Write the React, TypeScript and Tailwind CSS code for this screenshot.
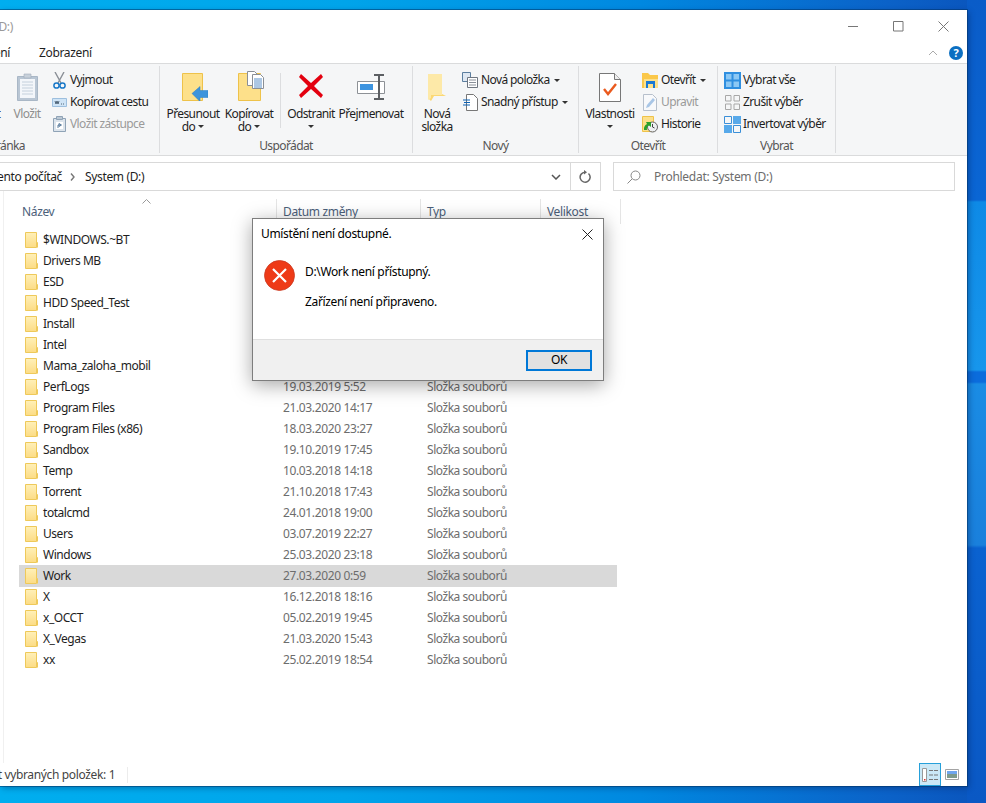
import React from 'react';

const rows = [
  ['$WINDOWS.~BT', '', ''],
  ['Drivers MB', '', ''],
  ['ESD', '', ''],
  ['HDD Speed_Test', '', ''],
  ['Install', '', ''],
  ['Intel', '', ''],
  ['Mama_zaloha_mobil', '', ''],
  ['PerfLogs', '19.03.2019 5:52', 'Složka souborů'],
  ['Program Files', '21.03.2020 14:17', 'Složka souborů'],
  ['Program Files (x86)', '18.03.2020 23:27', 'Složka souborů'],
  ['Sandbox', '19.10.2019 17:45', 'Složka souborů'],
  ['Temp', '10.03.2018 14:18', 'Složka souborů'],
  ['Torrent', '21.10.2018 17:43', 'Složka souborů'],
  ['totalcmd', '24.01.2018 19:00', 'Složka souborů'],
  ['Users', '03.07.2019 22:27', 'Složka souborů'],
  ['Windows', '25.03.2020 23:18', 'Složka souborů'],
  ['Work', '27.03.2020 0:59', 'Složka souborů'],
  ['X', '16.12.2018 18:16', 'Složka souborů'],
  ['x_OCCT', '05.02.2019 19:45', 'Složka souborů'],
  ['X_Vegas', '21.03.2020 15:43', 'Složka souborů'],
  ['xx', '25.02.2019 18:54', 'Složka souborů'],
];

function FolderSmall() {
  return (
    <svg width="13" height="16" viewBox="0 0 13 16" className="shrink-0">
      <defs>
        <linearGradient id="fs" x1="0" y1="0" x2="0" y2="1">
          <stop offset="0" stopColor="#fff0b8" />
          <stop offset="1" stopColor="#fcdc85" />
        </linearGradient>
      </defs>
      <path d="M.5.5h11v15H.5z" fill="url(#fs)" stroke="#eec95a" />
      <path d="M12.500 15.500v-5h-1v5" fill="#fff3c8" stroke="#eec95a" />
    </svg>
  );
}

function Caret() {
  return <span className="inline-block w-0 h-0 border-x-[3px] border-x-transparent border-t-[3px] border-t-[#333]" />;
}

function LargeButton({ w, lines, caret, muted, children }: { w: number; lines: string[]; caret?: boolean; muted?: boolean; children?: React.ReactNode }) {
  return (
    <div className={`flex flex-col items-center shrink-0 ${muted ? 'text-[#8e8e8e]' : ''}`} style={{ width: w }}>
      <div className="h-[41px] pt-[7px] flex justify-center">{children}</div>
      {lines.map((l, i) => (
        <div key={i} className="h-[13px] leading-[13px] whitespace-nowrap flex items-center gap-[3px]">
          {l}
          {caret && lines.length > 1 && i === lines.length - 1 && <Caret />}
        </div>
      ))}
      {caret && lines.length === 1 && (
        <div className="h-[13px] flex items-center"><Caret /></div>
      )}
    </div>
  );
}

function SmallButton({ icon, label, caret, muted }: { icon: React.ReactNode; label: string; caret?: boolean; muted?: boolean }) {
  return (
    <div className={`h-[22px] flex items-center whitespace-nowrap ${muted ? 'text-[#9a9a9a]' : ''}`}>
      <div className="w-[20px] flex justify-center shrink-0">{icon}</div>
      <span className="ml-[1px]">{label}</span>
      {caret && <span className="ml-[4px] flex"><Caret /></span>}
    </div>
  );
}

function Group({ w, label, children }: { w: number; label: React.ReactNode; children: React.ReactNode }) {
  return (
    <div className="shrink-0 h-[87px] mt-[2px] border-r border-[#dcdddf] flex flex-col" style={{ width: w }}>
      <div className="h-[71px] flex">{children}</div>
      <div className="text-center leading-[14px] text-[#555] mt-[3px] whitespace-nowrap">{label}</div>
    </div>
  );
}

function MoveIcon() {
  return (
    <svg width="26" height="28" viewBox="0 0 26 28" className="ml-[4px]">
      <path d="M.5.500h20v27H.5z" fill="#fde08a" stroke="#eec24a" />
      <path d="M10 20.500l8-7v4h8v7h-8v4z" fill="#3d94dc" stroke="#2a7cc2" strokeWidth=".5" />
    </svg>
  );
}

function CopyIcon() {
  return (
    <svg width="26" height="30" viewBox="0 0 26 30" className="ml-[4px] -mt-[2px]">
      <path d="M.5 2.500h22v27H.5z" fill="#fde08a" stroke="#eec24a" />
      <path d="M9.500.5h7l3 3v11h-10z" fill="#fff" stroke="#8a8f96" />
      <path d="M14.500 3.500h8l3 3v11h-11z" fill="#fff" stroke="#8a8f96" />
      <path d="M16 8h8M16 10h8M16 12h8M16 14h8M16 16h8" stroke="#5a8fc8" />
    </svg>
  );
}

function RenameIcon() {
  return (
    <svg width="29" height="26" viewBox="0 0 29 26" className="mt-[1px]">
      <path d="M.5 7.500h27v12H.5z" fill="#fff" stroke="#8d9196" />
      <path d="M3 10h13v6H3z" fill="#3d94e0" />
      <path d="M17 1h10M17 25h10M22 1v24" stroke="#5c5f63" strokeWidth="2" fill="none" />
    </svg>
  );
}

function ClipboardIcon() {
  return (
    <svg width="21" height="29" viewBox="0 0 21 29">
      <path d="M.5 3.500h20v24H.5z" fill="#b9c6d4" stroke="#a9b7c6" />
      <path d="M3 6h15v19H3z" fill="#f3f6fa" />
      <path d="M5 9h11M5 12h11M5 15h11M5 18h11M5 21h11" stroke="#c4d0dc" />
      <path d="M7 1h7v4H7z" fill="#c7d0da" stroke="#a3adb8" strokeWidth=".6" />
    </svg>
  );
}

export default function App() {
  return (
    <div className="relative w-[986px] h-[803px] overflow-hidden bg-[linear-gradient(90deg,#00aeef_0%,#00a4ea_35%,#0088e0_65%,#0b62c8_90%,#0a54bc_100%)] pt-[10px] text-[12px] text-[#1e1e1e] tracking-[-0.35px] [font-family:'Noto_Sans',sans-serif]">
      {/* wallpaper on the right edge */}
      <div className="absolute right-0 top-0 w-[19px] h-full bg-[linear-gradient(180deg,#0a5cc8_0px,#0a66d4_200px,#0e8ae6_202px,#1796ec_370px,#0b6cdc_372px,#0b6cdc_382px,#1a8ce4_384px,#1a86e0_460px,#1a80dc_545px,#0a62d0_548px,#0a58c4_803px)]" />

      {/* Explorer window */}
      <div className="relative w-[967px] h-[776px] bg-white flex flex-col overflow-hidden shadow-[0_0_0_1px_rgba(0,50,100,0.5),2px_2px_6px_rgba(0,30,80,0.4)]">
        {/* Title bar */}
        <div className="h-[33px] flex items-center shrink-0 relative text-[#9a9a9a]">
          <span className="ml-[-65px] w-[78px] text-right whitespace-nowrap">System (D:)</span>
          <div className="ml-auto flex items-center">
            <svg width="11" height="11" viewBox="0 0 11 11" className="mr-[34px]"><path d="M0 5.500h10" stroke="#777" /></svg>
            <svg width="11" height="11" viewBox="0 0 11 11" className="mr-[34px]"><path d="M.5.500h9.500v9.500H.5z" fill="none" stroke="#777" /></svg>
            <svg width="11" height="11" viewBox="0 0 11 11" className="mr-[18px]"><path d="M.5.500l10 10M10.500.500l-10 10" stroke="#777" /></svg>
          </div>
        </div>

        {/* Tabs */}
        <div className="h-[20px] flex items-center shrink-0 whitespace-nowrap">
          <span className="ml-[-30px] w-[40px] text-right">Sdílení</span>
          <span className="ml-[29px]">Zobrazení</span>
          <div className="ml-auto flex items-center mr-[4px]">
            <svg width="10" height="6" viewBox="0 0 10 6" className="mr-[11px]"><path d="M1 5l4-4 4 4" fill="none" stroke="#aaa" /></svg>
            <span className="w-[14px] h-[14px] rounded-full bg-[#0b6fc2] text-white text-[11px] font-bold flex items-center justify-center">?</span>
          </div>
        </div>

        {/* Ribbon */}
        <div className="h-[93px] shrink-0 bg-[#f5f6f7] border-y border-[#dadbdc] flex tracking-[-0.6px]">
          <Group w={160} label={<div className="ml-[-40px] w-[65px] text-right">Schránka</div>}>
            <div className="ml-[-51px] flex">
              <LargeButton w={54} lines={['Kopírovat']} />
              <div className="w-[9px] shrink-0" />
              <LargeButton w={30} muted lines={['Vložit']}><ClipboardIcon /></LargeButton>
            </div>
            <div className="flex flex-col pt-[3px] ml-[7px]">
              <SmallButton label="Vyjmout" icon={
                <svg width="13" height="17" viewBox="0 0 13 17"><path d="M2 0l6 11M11 0L5 11" stroke="#8a8f96" strokeWidth="1.400" fill="none" /><circle cx="3.500" cy="13.500" r="2.600" fill="none" stroke="#1878c8" strokeWidth="1.500" /><circle cx="9.500" cy="13.500" r="2.600" fill="none" stroke="#1878c8" strokeWidth="1.500" /></svg>
              } />
              <SmallButton label="Kopírovat cestu" icon={
                <svg width="15" height="9" viewBox="0 0 15 9"><path d="M.5.500h14v8H.5z" fill="#cfe4f6" stroke="#9dbfde" /><path d="M3 3l1 3 1-3 1 3 1-3M9 6h1M11 6h1" fill="none" stroke="#33475c" strokeWidth=".8" /></svg>
              } />
              <SmallButton muted label="Vložit zástupce" icon={
                <svg width="13" height="16" viewBox="0 0 13 16"><path d="M.5 2.500h12v13H.5z" fill="#dce4ec" stroke="#8fa3b6" /><path d="M3.500.5h6v3h-6z" fill="#bcc8d4" stroke="#8fa3b6" /><path d="M3 6h7v7H3z" fill="#fff" /><path d="M5 12V9h3M6 7.500l2.500 1.500L6 10.500z" fill="none" stroke="#5d7f9f" /></svg>
              } />
            </div>
          </Group>
          <Group w={253} label="Uspořádat">
            <div className="w-[4px] shrink-0" />
            <LargeButton w={58} lines={['Přesunout', 'do']} caret><MoveIcon /></LargeButton>
            <LargeButton w={54} lines={['Kopírovat', 'do']} caret><CopyIcon /></LargeButton>
            <div className="w-[8px] shrink-0 flex justify-center mt-[7px] h-[55px]"><div className="w-px bg-[#dcdddf]" /></div>
            <LargeButton w={54} lines={['Odstranit']} caret>
              <svg width="26" height="26" viewBox="0 0 26 26"><path d="M3 1l10 9 10-9 2 3-9 9 9 9-2 3-10-9-10 9-2-3 9-9-9-9z" fill="#e3000f" /></svg>
            </LargeButton>
            <LargeButton w={66} lines={['Přejmenovat']}><RenameIcon /></LargeButton>
          </Group>
          <Group w={166} label="Nový">
            <LargeButton w={48} lines={['Nová', 'složka']}>
              <svg width="20" height="29" viewBox="0 0 20 29"><path d="M1 1h14v20l4 2H7l-3 5-3-3z" fill="#fbd873" /><path d="M1 1h14v21H4v3l-3 2z" fill="#fde9a8" /></svg>
            </LargeButton>
            <div className="flex flex-col pt-[3px] ml-[-1px]">
              <SmallButton caret label="Nová položka" icon={
                <svg width="16" height="16" viewBox="0 0 16 16"><path d="M.5.500h8v9h-8z" fill="#dfe8f2" stroke="#5c7e9f" /><path d="M5.500 5.500h10v10h-10z" fill="#fff" stroke="#6f7680" /><path d="M7 8h7M7 10.500h7M7 13h7" stroke="#8a9099" /></svg>
              } />
              <SmallButton caret label="Snadný přístup" icon={
                <svg width="15" height="17" viewBox="0 0 15 17"><path d="M3.500.5h7l4 4v12h-11z" fill="#fff" stroke="#777" /><path d="M0 6h7M1 8.500h6M0 11h7" stroke="#0d62b5" /></svg>
              } />
            </div>
          </Group>
          <Group w={139} label="Otevřít">
            <div className="w-[3px] shrink-0" />
            <LargeButton w={56} lines={['Vlastnosti']} caret>
              <svg width="22" height="29" viewBox="0 0 22 29"><path d="M.5.500h15l6 6v22H.5z" fill="#fff" stroke="#777" /><path d="M15.500.5v6h6" fill="#eee" stroke="#777" /><path d="M5 16l4 5 8-10" fill="none" stroke="#ea5a1e" strokeWidth="2.400" /></svg>
            </LargeButton>
            <div className="flex flex-col pt-[3px] ml-[2px]">
              <SmallButton caret label="Otevřít" icon={
                <svg width="16" height="15" viewBox="0 0 16 15"><path d="M0 0h6l2 2h8v13H0z" fill="#fbc84a" /><path d="M2 6h14v9H2z" fill="#fde08a" /><path d="M4 8h9v7h-2v-4H6v4H4z" fill="#1b79d4" /></svg>
              } />
              <SmallButton muted label="Upravit" icon={
                <svg width="14" height="17" viewBox="0 0 14 17"><path d="M.5.500h9l4 4v12H.5z" fill="#f8f9fb" stroke="#b7c0cc" /><path d="M3 14l1-3 6-7 2 2-6 7z" fill="#a9c6e6" /></svg>
              } />
              <SmallButton label="Historie" icon={
                <svg width="16" height="17" viewBox="0 0 16 17"><path d="M.5.500h11v15H.5z" fill="#fde08a" stroke="#eec24a" /><circle cx="10.500" cy="11" r="5" fill="#eef0f2" stroke="#666" /><path d="M10.500 8v3l2 1" fill="none" stroke="#444" /><path d="M2 14a6 6 0 0 1 3-6l-1-2h5v5L7 9.500A4 4 0 0 0 5 14z" fill="#2ca02c" /></svg>
              } />
            </div>
          </Group>
          <Group w={118} label="Vybrat">
            <div className="flex flex-col pt-[3px] ml-[4px]">
              <SmallButton label="Vybrat vše" icon={
                <svg width="17" height="17" viewBox="0 0 17 17"><path d="M0 0h17v17H0z" fill="#2f8fe0" /><path d="M2 2h5.500v5.500H2zM9.500 2H15v5.500H9.500zM2 9.500h5.500V15H2zM9.500 9.500H15V15H9.500z" fill="#8cc8f4" /></svg>
              } />
              <SmallButton label="Zrušit výběr" icon={
                <svg width="15" height="15" viewBox="0 0 15 15"><path d="M.5.500h5.500v5.500H.5zM9 .5h5.500v5.500H9zM.5 9h5.500v5.500H.5zM9 9h5.500v5.500H9z" fill="#f5f6f7" stroke="#a8a8a8" /></svg>
              } />
              <SmallButton label="Invertovat výběr" icon={
                <svg width="17" height="17" viewBox="0 0 17 17"><path d="M.5.500h7v7h-7z" fill="#f5f6f7" stroke="#3a8fd8" /><path d="M9 0h8v8H9z" fill="#57a9ea" /><path d="M0 9h8v8H0z" fill="#57a9ea" /><path d="M9.500 9.500h7v7h-7z" fill="#f5f6f7" stroke="#3a8fd8" /></svg>
              } />
            </div>
          </Group>
        </div>

        {/* Address + search */}
        <div className="h-[29px] mt-[6px] shrink-0 flex whitespace-nowrap">
          <div className="w-[601px] border border-l-0 border-[#d9d9d9] flex items-center">
            <span className="ml-[-17px] w-[79px] text-right">Tento počítač</span>
            <svg width="6" height="8" viewBox="0 0 6 8" className="ml-[8px]"><path d="M1 .5l3 3.500-3 3.500" fill="none" stroke="#777" strokeWidth="1.400" /></svg>
            <span className="ml-[9px]">System (D:)</span>
            <svg width="10" height="6" viewBox="0 0 10 6" className="ml-auto mr-[9px]"><path d="M1 1l4 4 4-4" fill="none" stroke="#555" strokeWidth="1.500" /></svg>
            <div className="h-full w-[30px] border-l border-[#d9d9d9] flex items-center justify-center">
              <svg width="13" height="14" viewBox="0 0 13 14"><path d="M9.500 3.500a5 5 0 1 1-3.500-1.300" fill="none" stroke="#666" strokeWidth="1.500" /><path d="M5 0l3 2.200-3 2.300z" fill="#666" /></svg>
            </div>
          </div>
          <div className="w-[342px] ml-[12px] border border-[#d9d9d9] flex items-center text-[#6d6d6d] tracking-[-0.28px]">
            <svg width="14" height="14" viewBox="0 0 14 14" className="ml-[13px]"><circle cx="8.500" cy="5.500" r="4.500" fill="none" stroke="#888" /><path d="M5 9l-4.500 4.500" stroke="#888" /></svg>
            <span className="ml-[13px]">Prohledat: System (D:)</span>
          </div>
        </div>

        {/* Listing, with the edge of the hidden navigation pane on the left */}
        <div className="flex-1 flex min-h-0">
          <div className="w-[4px] shrink-0 border-r border-[#f0f0f0]" />
          <div className="flex-1 flex flex-col">
            <div className="h-[25px] mt-[8px] shrink-0 flex text-[#4c607a] whitespace-nowrap relative">
              <div className="w-[273px] pl-[18px] flex items-center border-r border-[#e5e5e5]">Název</div>
              <div className="w-[144px] pl-[6px] flex items-center border-r border-[#e5e5e5]">Datum změny</div>
              <div className="w-[120px] pl-[6px] flex items-center border-r border-[#e5e5e5]">Typ</div>
              <div className="w-[80px] pl-[6px] flex items-center border-r border-[#e5e5e5]">Velikost</div>
              <svg width="9" height="5" viewBox="0 0 9 5" className="absolute left-[138px] top-0"><path d="M.5 4.500l4-4 4 4" fill="none" stroke="#999" /></svg>
            </div>

            <div className="flex-1 pt-[5px] flex flex-col whitespace-nowrap">
              {rows.map(([name, date, type]) => (
                <div key={name} className={`h-[22px] mb-[-1px] w-[598px] ml-[15px] flex items-center shrink-0 ${name === 'Work' ? 'bg-[#d9d9d9]' : ''}`}>
                  <div className="w-[24px] pl-[6px] shrink-0"><FolderSmall /></div>
                  <div className="w-[240px] shrink-0 tracking-[-0.45px]">{name}</div>
                  <div className="w-[144px] shrink-0 text-[#6d6d6d] tracking-[-0.37px]">{date}</div>
                  <div className="text-[#6d6d6d] tracking-[-0.45px]">{type}</div>
                </div>
              ))}
            </div>
          </div>
        </div>

        {/* Status bar */}
        <div className="h-[23px] shrink-0 flex items-center whitespace-nowrap text-[#444]">
          <span className="ml-[-28px] w-[143px] text-right">Počet vybraných položek: 1</span>
          <div className="w-px h-[16px] bg-[#ececec] ml-[12px]" />
          <div className="ml-auto h-full w-[22px] mr-[4px] bg-[#cbe8f6] border border-[#26a0da] flex items-center justify-center">
            <svg width="16" height="14" viewBox="0 0 16 14"><path d="M.5.500h4v13h-4z" fill="#fff" stroke="#999" /><path d="M7 2.500h4M12 2.500h4M7 7h4M12 7h4M7 11.500h4M12 11.500h4" stroke="#777" /><path d="M2 11h1.500v1.500H2z" fill="#d33" /></svg>
          </div>
          <div className="mr-[8px]">
            <svg width="14" height="11" viewBox="0 0 14 11"><path d="M.5.500h13v10H.5z" fill="#fff" stroke="#a3a3a3" /><path d="M2 2h10v3H2z" fill="#6fa6ee" /><path d="M2 5h10v4H2z" fill="#7d9a8c" /></svg>
          </div>
        </div>
      </div>

      {/* Error dialog */}
      <div className="absolute left-[252px] top-[218px] w-[352px] h-[163px] bg-white border border-[#7d7d7d] shadow-[0_4px_18px_rgba(0,0,0,0.35)] flex flex-col text-black">
        <div className="h-[28px] flex items-center pl-[8px] mt-[1px] shrink-0">
          <span>Umístění není dostupné.</span>
          <svg width="11" height="11" viewBox="0 0 11 11" className="ml-auto mr-[10px]"><path d="M.5.500l10 10M10.500.500l-10 10" stroke="#222" /></svg>
        </div>
        <div className="flex-1 flex pl-[11px] pt-[12px]">
          <svg width="31" height="31" viewBox="0 0 31 31" className="shrink-0">
            <circle cx="15.500" cy="15.500" r="15" fill="#ee3a17" stroke="#c93a22" strokeWidth=".8" />
            <path d="M9 9l13 13M22 9L9 22" stroke="#fff" strokeWidth="2.200" />
          </svg>
          <div className="ml-[10px] pt-[4px] flex flex-col gap-[14px] leading-[16px]">
            <div>D:\Work není přístupný.</div>
            <div>Zařízení není připraveno.</div>
          </div>
        </div>
        <div className="h-[41px] shrink-0 bg-[#f0f0f0] border-t border-[#dfdfdf] flex items-center justify-end pr-[11px]">
          <div className="w-[66px] h-[21px] bg-[#e1e1e1] border-2 border-[#0078d7] flex items-center justify-center">OK</div>
        </div>
      </div>
    </div>
  );
}
